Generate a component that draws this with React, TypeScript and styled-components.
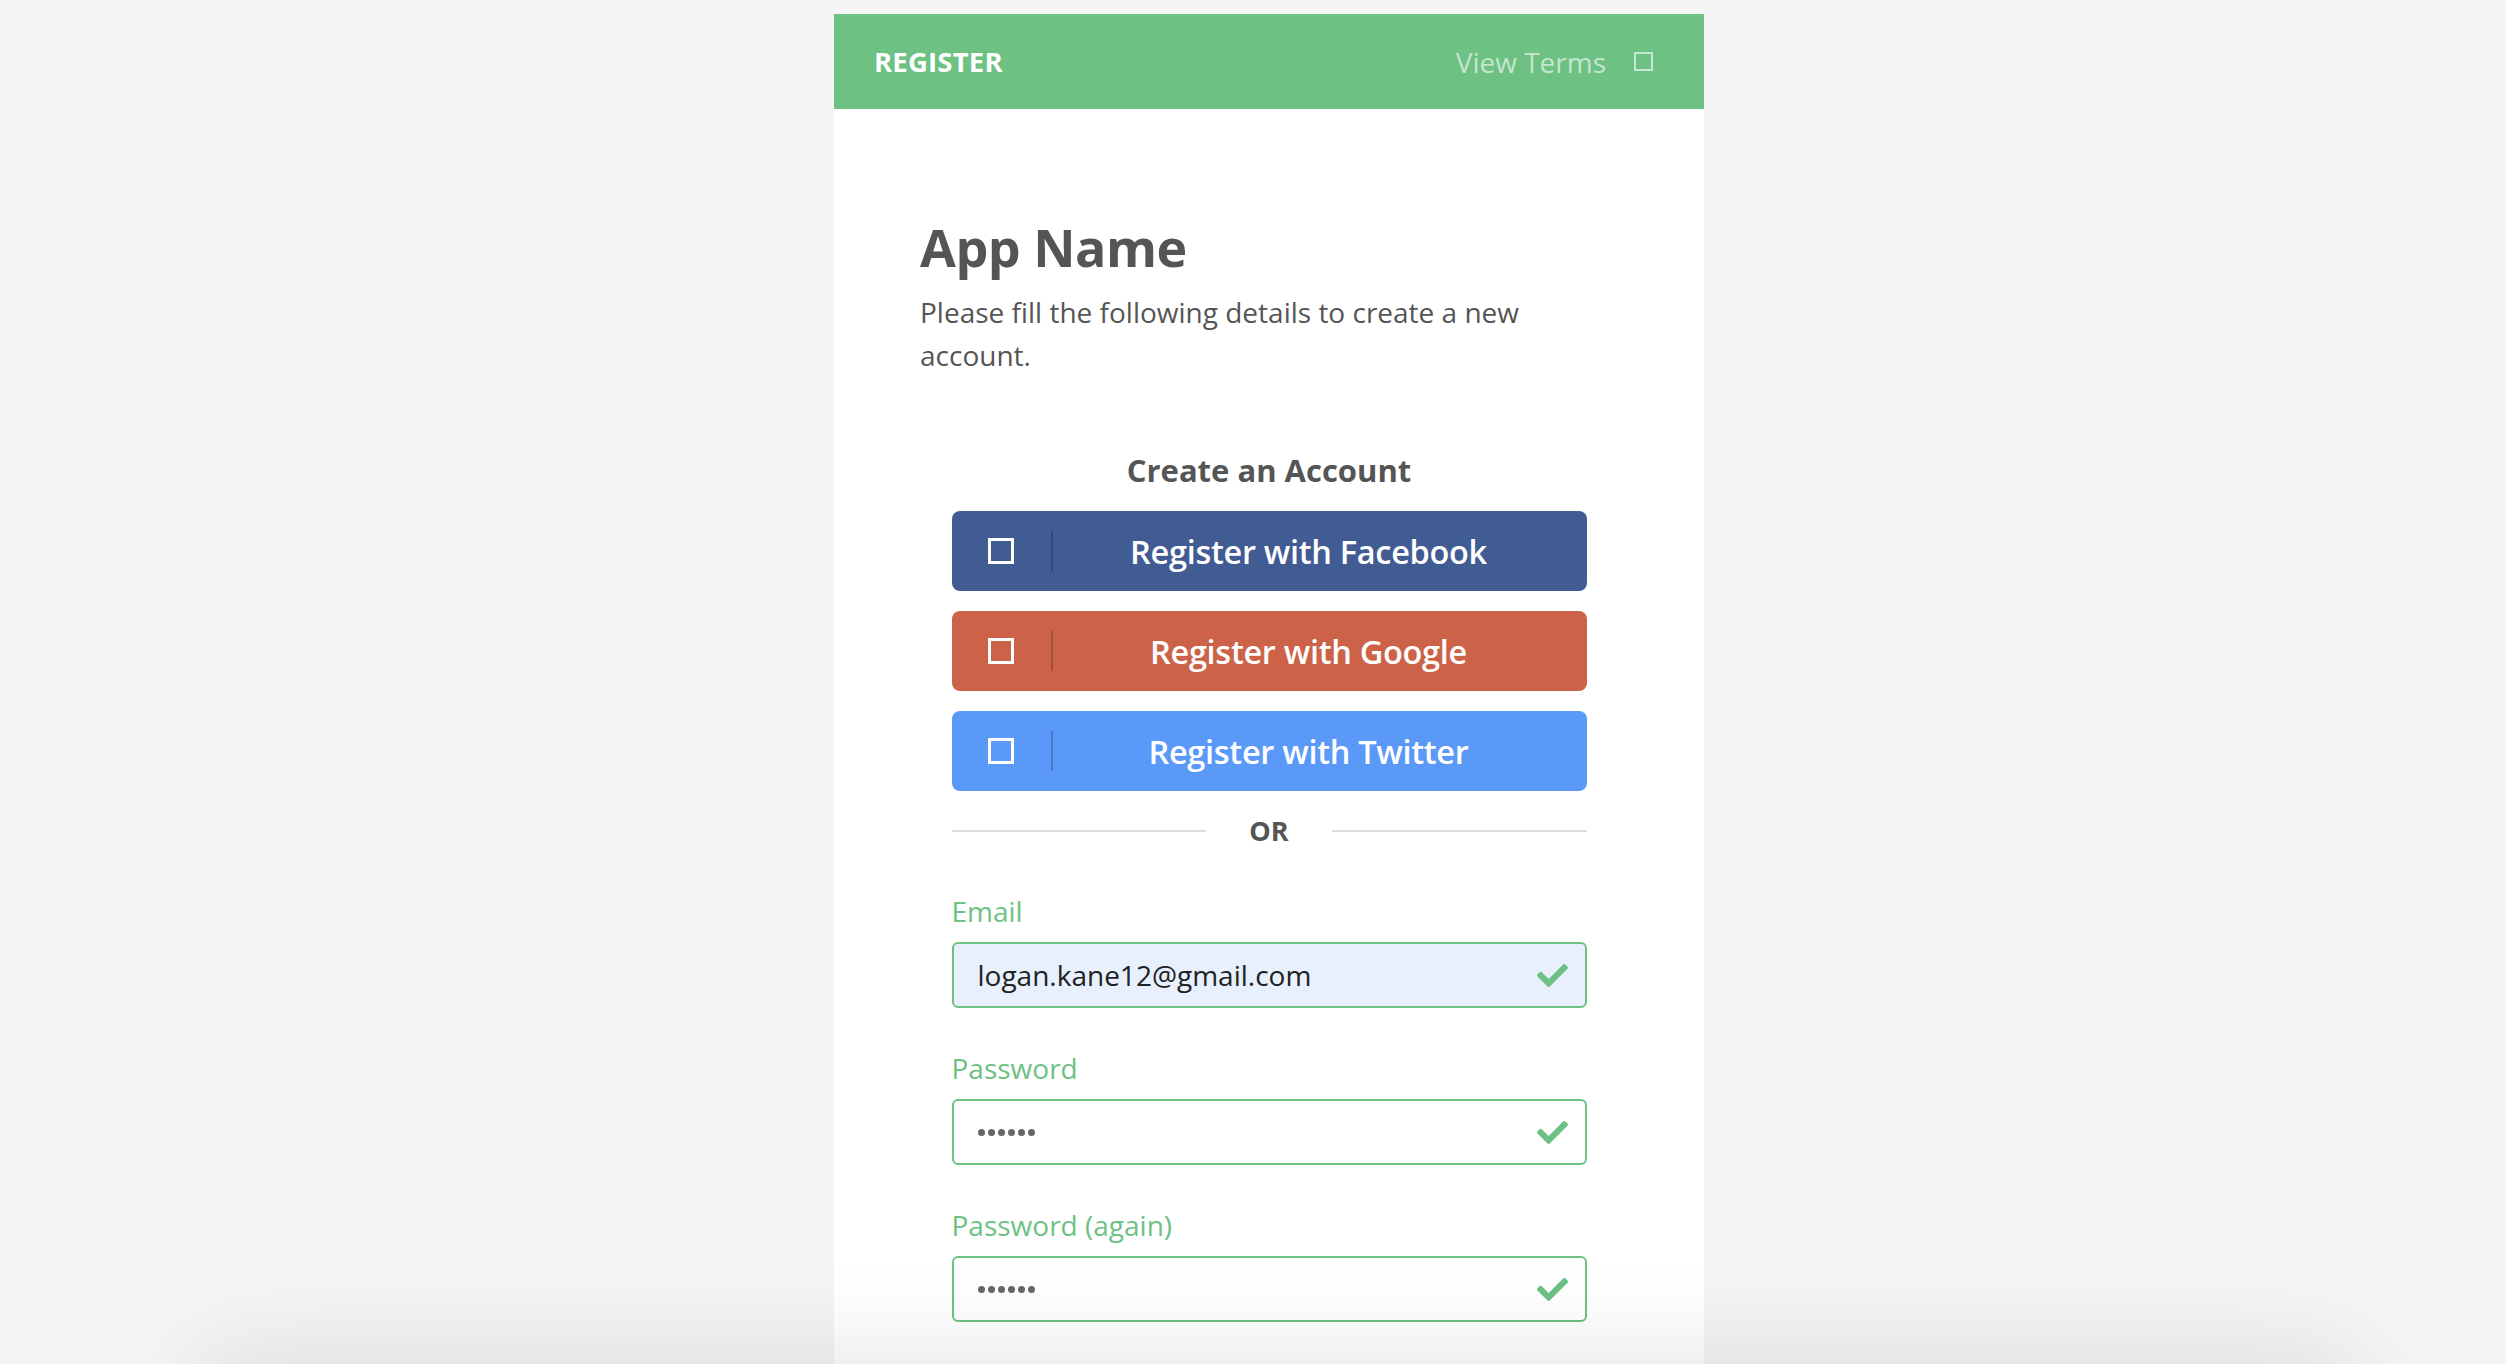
import React from 'react';
import styled, { createGlobalStyle } from 'styled-components';
import { FaCheck } from 'react-icons/fa';

const GlobalStyle = createGlobalStyle`
  html, body {
    margin: 0;
    padding: 0;
    background: #f5f5f5;
    font-family: "Open Sans", "Noto Sans", sans-serif;
    overflow: hidden;
  }
  * { box-sizing: border-box; }
`;

const green = '#6cc183';

const Page = styled.div`
  display: flex;
  justify-content: center;
  padding: 14px 0 0 32px;
  min-height: 100vh;
`;

const Card = styled.div`
  width: 870px;
  min-height: 1400px;
  background: #fff;
  display: flex;
  flex-direction: column;
`;

const Header = styled.header`
  height: 95px;
  background: ${green};
  display: flex;
  align-items: center;
  padding: 0 51px 0 40px;
`;

const Title = styled.h1`
  margin: 0;
  flex: 1;
  color: #fff;
  font-size: 27.5px;
  font-weight: 700;
  letter-spacing: 0.2px;
`;

const TermsLink = styled.a`
  color: rgba(255, 255, 255, 0.62);
  font-size: 28px;
  text-decoration: none;
  display: flex;
  align-items: center;
  gap: 28px;
`;

const Box = styled.span<{ $size: number; $stroke: number; $color: string }>`
  display: inline-block;
  width: ${(p) => p.$size}px;
  height: ${(p) => p.$size}px;
  border: ${(p) => p.$stroke}px solid ${(p) => p.$color};
  flex: none;
`;

const Body = styled.main`
  padding: 106px 86px 0;
`;

const AppName = styled.h2`
  margin: 0;
  font-size: 52px;
  line-height: 64px;
  font-weight: 700;
  color: #555;
  letter-spacing: -0.5px;
`;

const Intro = styled.p`
  margin: 12px 0 0;
  font-size: 28px;
  line-height: 43px;
  color: #555;
`;

const Form = styled.div`
  width: 635px;
  margin: 0 auto;
  display: flex;
  flex-direction: column;
`;

const FormTitle = styled.h3`
  margin: 73px 0 21px;
  text-align: center;
  font-size: 31px;
  line-height: 40px;
  font-weight: 700;
  color: #555;
`;

const SocialButton = styled.button<{ $bg: string }>`
  height: 80px;
  border: 0;
  border-radius: 8px;
  background: ${(p) => p.$bg};
  display: flex;
  align-items: center;
  padding: 0 22px 0 36px;
  margin-bottom: 20px;
  cursor: pointer;
  font-family: inherit;
`;

const IconSlot = styled.span`
  width: 65px;
  height: 40px;
  display: flex;
  align-items: center;
  border-right: 2px solid rgba(0, 0, 0, 0.2);
`;

const ButtonLabel = styled.span`
  flex: 1;
  text-align: center;
  color: #fff;
  font-size: 32.5px;
  font-weight: 600;
  letter-spacing: -0.3px;
`;

const OrRow = styled.div`
  display: flex;
  align-items: center;
  color: #555;
  font-weight: 700;
  font-size: 27px;
  line-height: 40px;

  &::before,
  &::after {
    content: '';
    flex: 1;
    height: 2px;
    background: #ddd;
  }
`;

const OrText = styled.span`
  width: 126px;
  text-align: center;
`;

const Field = styled.div`
  display: flex;
  flex-direction: column;
  margin-top: 40px;
`;

const Label = styled.label`
  color: ${green};
  font-size: 28px;
  line-height: 40px;
  margin-bottom: 11px;
`;

const InputBox = styled.div<{ $filled?: boolean }>`
  height: 66px;
  border: 2px solid ${green};
  border-radius: 6px;
  background: ${(p) => (p.$filled ? '#e8f0fe' : '#fff')};
  display: flex;
  align-items: center;
  padding: 0 17px 0 24px;
  gap: 12px;
`;

const Value = styled.span`
  flex: 1;
  font-size: 28px;
  color: #222;
`;

const Dots = styled.span`
  flex: 1;
  display: flex;
  gap: 3px;
  span {
    width: 7px;
    height: 7px;
    border-radius: 50%;
    background: #666;
  }
`;

const Check = styled(FaCheck)`
  color: ${green};
  width: 31px;
  height: 31px;
`;

const BottomShade = styled.div`
  position: fixed;
  top: 100vh;
  left: 200px;
  right: 150px;
  height: 100px;
  box-shadow: 0 0 110px 0 rgba(0, 0, 0, 0.13);
  pointer-events: none;
`;

const socials = [
  { label: 'Register with Facebook', bg: '#415b93' },
  { label: 'Register with Google', bg: '#cc6348' },
  { label: 'Register with Twitter', bg: '#5a99f7' },
];

const fields = [
  { label: 'Email', value: 'logan.kane12@gmail.com', filled: true },
  { label: 'Password', secret: true },
  { label: 'Password (again)', secret: true },
];

export default function App() {
  return (
    <>
      <GlobalStyle />
      <Page>
        <Card>
          <Header>
            <Title>REGISTER</Title>
            <TermsLink href="#">
              View Terms
              <Box $size={19} $stroke={2} $color="rgba(255,255,255,0.62)" />
            </TermsLink>
          </Header>
          <Body>
            <AppName>App Name</AppName>
            <Intro>Please fill the following details to create a new account.</Intro>
            <Form>
              <FormTitle>Create an Account</FormTitle>
              {socials.map((s) => (
                <SocialButton key={s.label} $bg={s.bg}>
                  <IconSlot>
                    <Box $size={26} $stroke={3} $color="#fff" />
                  </IconSlot>
                  <ButtonLabel>{s.label}</ButtonLabel>
                </SocialButton>
              ))}
              <OrRow>
                <OrText>OR</OrText>
              </OrRow>
              {fields.map((f) => (
                <Field key={f.label}>
                  <Label>{f.label}</Label>
                  <InputBox $filled={f.filled}>
                    {f.secret ? (
                      <Dots>
                        {Array.from({ length: 6 }).map((_, i) => (
                          <span key={i} />
                        ))}
                      </Dots>
                    ) : (
                      <Value>{f.value}</Value>
                    )}
                    <Check />
                  </InputBox>
                </Field>
              ))}
            </Form>
          </Body>
        </Card>
      </Page>
      <BottomShade />
    </>
  );
}
